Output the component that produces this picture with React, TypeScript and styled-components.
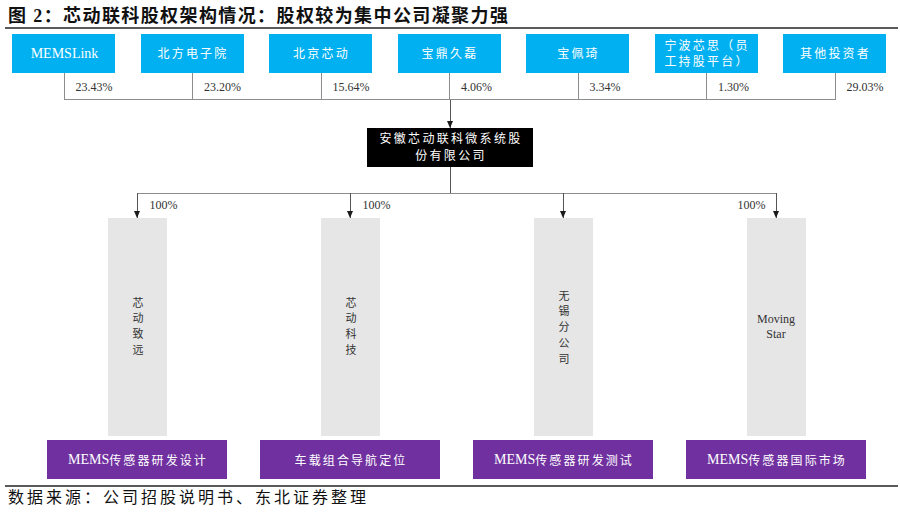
import React from "react";
import styled, { createGlobalStyle, css } from "styled-components";

const GlobalStyle = createGlobalStyle`
  html, body {
    margin: 0;
    padding: 0;
    background: #fff;
  }
  body {
    font-family: "Liberation Serif", "Times New Roman", "Noto Sans CJK SC", serif;
  }
`;

const Page = styled.div`
  width: 900px;
  height: 512px;
  overflow: hidden;
  display: flex;
  flex-direction: column;
`;

const Title = styled.h1`
  margin: 0 2px 0 5px;
  padding: 5px 0 0 3px;
  height: 22px;
  line-height: 22px;
  border-bottom: 2px solid #5a5a5a;
  font-size: 18px;
  font-weight: 700;
  letter-spacing: 1.4px;
  color: #111;
  white-space: nowrap;
`;

const HolderRow = styled.div`
  display: flex;
  gap: 25.5px;
  margin-top: 5px;
  padding-left: 12px;
`;

const Latin = styled.span`
  font-family: "Liberation Serif", "Times New Roman", serif;
  font-size: 14px;
  letter-spacing: 0;
`;

const HolderBox = styled.div`
  flex: none;
  width: 103px;
  height: 39px;
  display: flex;
  align-items: center;
  justify-content: center;
  padding-left: 2px;
  box-sizing: border-box;
  background: #00b0f0;
  color: #fff;
  font-size: 12px;
  letter-spacing: 2.2px;
  line-height: 16px;
  text-align: center;
`;

const ShareRow = styled.div`
  display: flex;
  height: 27px;
  padding-left: 63.5px;
`;

const ShareCell = styled.div<{ $last?: boolean }>`
  flex: none;
  box-sizing: border-box;
  width: ${(p) => (p.$last ? "60px" : "128.5px")};
  height: 27px;
  display: flex;
  align-items: center;
  padding: 2px 0 0 11px;
  border-left: 1px solid #8c8c8c;
  border-bottom: ${(p) => (p.$last ? "none" : "1px solid #8c8c8c")};
  font-size: 12px;
  color: #333;
`;

const Drop = styled.div<{ $h: number; $arrow?: boolean }>`
  position: relative;
  align-self: center;
  flex: none;
  width: 1px;
  height: ${(p) => p.$h}px;
  background: #555;
  ${(p) =>
    p.$arrow &&
    css`
      &::after {
        content: "";
        position: absolute;
        left: -3px;
        bottom: 0;
        border-left: 3.5px solid transparent;
        border-right: 3.5px solid transparent;
        border-top: 7px solid #1a1a1a;
      }
    `}
`;

const Parent = styled.div`
  align-self: center;
  width: 166px;
  height: 39px;
  display: flex;
  align-items: center;
  justify-content: center;
  padding-left: 2px;
  box-sizing: border-box;
  background: #000;
  color: #fff;
  font-size: 12px;
  letter-spacing: 2.3px;
  line-height: 17px;
  text-align: center;
`;

const SubGrid = styled.div`
  display: grid;
  grid-template-columns: repeat(4, 213px);
  padding-left: 30.5px;
`;

const SubCol = styled.div<{ $first?: boolean; $last?: boolean }>`
  position: relative;
  display: flex;
  flex-direction: column;
  align-items: center;
  &::before {
    content: "";
    position: absolute;
    top: 0;
    height: 1px;
    background: #8c8c8c;
    left: ${(p) => (p.$first ? "50%" : "0")};
    right: ${(p) => (p.$last ? "50%" : "0")};
  }
`;

const Branch = styled.div`
  display: grid;
  grid-template-columns: 1fr 1px 1fr;
  align-items: center;
  width: 100%;
  height: 25px;
`;

const Pct = styled.span<{ $side: "left" | "right" }>`
  grid-column: ${(p) => (p.$side === "left" ? 1 : 3)};
  grid-row: 1;
  justify-self: ${(p) => (p.$side === "left" ? "end" : "start")};
  padding: ${(p) => (p.$side === "left" ? "0 10px 0 0" : "0 0 0 12px")};
  font-size: 12px;
  color: #333;
`;

const BranchLine = styled(Drop)`
  grid-column: 2;
  grid-row: 1;
`;

const Bar = styled.div`
  width: 59px;
  height: 218px;
  display: flex;
  align-items: center;
  justify-content: center;
  background: #e6e6e6;
  color: #333;
`;

const BarText = styled.span<{ $vertical?: boolean }>`
  text-align: center;
  ${(p) =>
    p.$vertical
      ? css`
          writing-mode: vertical-rl;
          font-size: 11px;
          letter-spacing: 4.8px;
          padding-top: 4px;
        `
      : css`
          font-size: 12px;
          line-height: 15px;
        `}
`;

const Business = styled.div`
  margin-top: 4px;
  width: 180px;
  height: 39px;
  display: flex;
  align-items: center;
  justify-content: center;
  padding-left: 2px;
  box-sizing: border-box;
  background: #7030a0;
  color: #fff;
  font-size: 12px;
  letter-spacing: 2.1px;
  white-space: nowrap;
`;

const Source = styled.div`
  margin: 6px 2px 0 5px;
  padding-left: 3px;
  border-top: 2px solid #5a5a5a;
  height: 21px;
  line-height: 21px;
  font-size: 16px;
  letter-spacing: 3px;
  color: #111;
  white-space: nowrap;
`;

const holders: { name: React.ReactNode; pct: string }[] = [
  { name: <Latin>MEMSLink</Latin>, pct: "23.43%" },
  { name: "北方电子院", pct: "23.20%" },
  { name: "北京芯动", pct: "15.64%" },
  { name: "宝鼎久磊", pct: "4.06%" },
  { name: "宝佩琦", pct: "3.34%" },
  {
    name: (
      <>
        宁波芯思（员
        <br />
        工持股平台）
      </>
    ),
    pct: "1.30%",
  },
  { name: "其他投资者", pct: "29.03%" },
];

const subs: {
  name: React.ReactNode;
  vertical: boolean;
  pct?: { side: "left" | "right" };
  biz: React.ReactNode;
}[] = [
  {
    name: "芯动致远",
    vertical: true,
    pct: { side: "right" },
    biz: (
      <>
        <Latin>MEMS</Latin>传感器研发设计
      </>
    ),
  },
  {
    name: "芯动科技",
    vertical: true,
    pct: { side: "right" },
    biz: "车载组合导航定位",
  },
  {
    name: "无锡分公司",
    vertical: true,
    biz: (
      <>
        <Latin>MEMS</Latin>传感器研发测试
      </>
    ),
  },
  {
    name: (
      <>
        Moving
        <br />
        Star
      </>
    ),
    vertical: false,
    pct: { side: "left" },
    biz: (
      <>
        <Latin>MEMS</Latin>传感器国际市场
      </>
    ),
  },
];

export default function App() {
  return (
    <Page>
      <GlobalStyle />
      <Title>图 2：芯动联科股权架构情况：股权较为集中公司凝聚力强</Title>

      <HolderRow>
        {holders.map((h, i) => (
          <HolderBox key={i}>{h.name}</HolderBox>
        ))}
      </HolderRow>

      <ShareRow>
        {holders.map((h, i) => (
          <ShareCell key={i} $last={i === holders.length - 1}>
            {h.pct}
          </ShareCell>
        ))}
      </ShareRow>

      <Drop $h={28} $arrow />
      <Parent>
        安徽芯动联科微系统股
        <br />
        份有限公司
      </Parent>
      <Drop $h={26} />

      <SubGrid>
        {subs.map((s, i) => (
          <SubCol key={i} $first={i === 0} $last={i === subs.length - 1}>
            <Branch>
              <BranchLine $h={25} $arrow />
              {s.pct && <Pct $side={s.pct.side}>100%</Pct>}
            </Branch>
            <Bar>
              <BarText $vertical={s.vertical}>{s.name}</BarText>
            </Bar>
            <Business>{s.biz}</Business>
          </SubCol>
        ))}
      </SubGrid>

      <Source>数据来源：公司招股说明书、东北证券整理</Source>
    </Page>
  );
}
